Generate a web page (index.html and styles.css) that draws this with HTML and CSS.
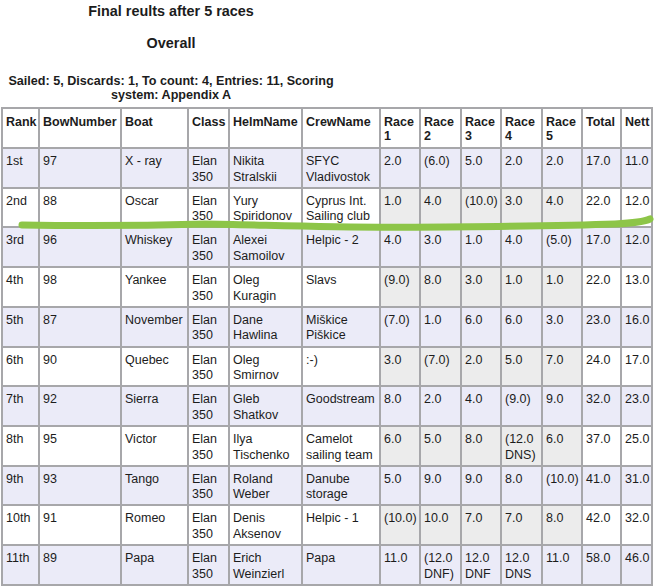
FILE: index.html
```html
<!DOCTYPE html>
<html lang="en">
<head>
<meta charset="utf-8">
<title>Final results</title>
<link rel="stylesheet" href="styles.css">
</head>
<body>
<div class="page">
  <header class="head">
    <h1 class="title">Final reults after 5 races</h1>
    <h2 class="subtitle">Overall</h2>
    <p class="meta">Sailed: 5, Discards: 1, To count: 4, Entries: 11, Scoring system: Appendix A</p>
  </header>
  <table class="results">
    <colgroup>
      <col class="c-rank"><col class="c-bow"><col class="c-boat"><col class="c-class"><col class="c-helm"><col class="c-crew">
      <col class="c-race"><col class="c-race2"><col class="c-race"><col class="c-race2"><col class="c-race"><col class="c-total"><col class="c-nett">
    </colgroup>
    <thead>
      <tr><th>Rank</th><th>BowNumber</th><th>Boat</th><th>Class</th><th>HelmName</th><th>CrewName</th><th>Race 1</th><th>Race 2</th><th>Race 3</th><th>Race 4</th><th>Race 5</th><th>Total</th><th>Nett</th></tr>
    </thead>
    <tbody>
      <tr class="odd"><td>1st</td><td>97</td><td>X - ray</td><td>Elan 350</td><td>Nikita Stralskii</td><td>SFYC Vladivostok</td><td class="r">2.0</td><td class="r">(6.0)</td><td class="r">5.0</td><td class="r">2.0</td><td class="r">2.0</td><td>17.0</td><td>11.0</td></tr>
      <tr><td>2nd</td><td>88</td><td>Oscar</td><td>Elan 350</td><td>Yury Spiridonov</td><td>Cyprus Int. Sailing club</td><td class="r">1.0</td><td class="r">4.0</td><td class="r">(10.0)</td><td class="r">3.0</td><td class="r">4.0</td><td>22.0</td><td>12.0</td></tr>
      <tr class="odd"><td>3rd</td><td>96</td><td>Whiskey</td><td>Elan 350</td><td>Alexei Samoilov</td><td>Helpic - 2</td><td class="r">4.0</td><td class="r">3.0</td><td class="r">1.0</td><td class="r">4.0</td><td class="r">(5.0)</td><td>17.0</td><td>12.0</td></tr>
      <tr><td>4th</td><td>98</td><td>Yankee</td><td>Elan 350</td><td>Oleg Kuragin</td><td>Slavs</td><td class="r">(9.0)</td><td class="r">8.0</td><td class="r">3.0</td><td class="r">1.0</td><td class="r">1.0</td><td>22.0</td><td>13.0</td></tr>
      <tr class="odd"><td>5th</td><td>87</td><td>November</td><td>Elan 350</td><td>Dane Hawlina</td><td>Miškice Piškice</td><td class="r">(7.0)</td><td class="r">1.0</td><td class="r">6.0</td><td class="r">6.0</td><td class="r">3.0</td><td>23.0</td><td>16.0</td></tr>
      <tr><td>6th</td><td>90</td><td>Quebec</td><td>Elan 350</td><td>Oleg Smirnov</td><td>:-)</td><td class="r">3.0</td><td class="r">(7.0)</td><td class="r">2.0</td><td class="r">5.0</td><td class="r">7.0</td><td>24.0</td><td>17.0</td></tr>
      <tr class="odd"><td>7th</td><td>92</td><td>Sierra</td><td>Elan 350</td><td>Gleb Shatkov</td><td>Goodstream</td><td class="r">8.0</td><td class="r">2.0</td><td class="r">4.0</td><td class="r">(9.0)</td><td class="r">9.0</td><td>32.0</td><td>23.0</td></tr>
      <tr><td>8th</td><td>95</td><td>Victor</td><td>Elan 350</td><td>Ilya Tischenko</td><td>Camelot sailing team</td><td class="r">6.0</td><td class="r">5.0</td><td class="r">8.0</td><td class="r">(12.0 DNS)</td><td class="r">6.0</td><td>37.0</td><td>25.0</td></tr>
      <tr class="odd"><td>9th</td><td>93</td><td>Tango</td><td>Elan 350</td><td>Roland Weber</td><td>Danube storage</td><td class="r">5.0</td><td class="r">9.0</td><td class="r">9.0</td><td class="r">8.0</td><td class="r">(10.0)</td><td>41.0</td><td>31.0</td></tr>
      <tr><td>10th</td><td>91</td><td>Romeo</td><td>Elan 350</td><td>Denis Aksenov</td><td>Helpic - 1</td><td class="r">(10.0)</td><td class="r">10.0</td><td class="r">7.0</td><td class="r">7.0</td><td class="r">8.0</td><td>42.0</td><td>32.0</td></tr>
      <tr class="odd"><td>11th</td><td>89</td><td>Papa</td><td>Elan 350</td><td>Erich Weinzierl</td><td>Papa</td><td class="r">11.0</td><td class="r">(12.0 DNF)</td><td class="r">12.0 DNF</td><td class="r">12.0 DNS</td><td class="r">11.0</td><td>58.0</td><td>46.0</td></tr>
    </tbody>
  </table>
  <svg class="highlight" width="658" height="586" viewBox="0 0 658 586" aria-hidden="true">
    <path d="M22,225 C80,226 150,225.5 205,224 C255,224.5 320,227.5 400,227.2 C500,226.5 575,225.5 615,224 C635,223 646,221 650,219" />
  </svg>
</div>
</body>
</html>
```

FILE: styles.css
```css
html, body {
  margin: 0;
  padding: 0;
  background: #ffffff;
}

.page {
  position: relative;
  width: 658px;
  height: 586px;
  overflow: hidden;
  font-family: "Liberation Sans", Arial, sans-serif;
  color: #1c1c1c;
}

.head {
  width: 342px;
  text-align: center;
  padding-top: 3px;
}

.title {
  margin: 0;
  font-size: 14.4px;
  line-height: 17px;
  font-weight: bold;
}

.subtitle {
  margin: 15px 0 0;
  font-size: 14.4px;
  line-height: 17px;
  font-weight: bold;
}

.meta {
  margin: 23px 0 0;
  font-size: 12.6px;
  line-height: 13.5px;
  font-weight: bold;
}

.results {
  margin: 5px 0 0 1px;
  border-collapse: collapse;
  table-layout: fixed;
  width: 650px;
  font-size: 12.5px;
}

.c-rank { width: 37px; }
.c-bow { width: 82px; }
.c-boat { width: 67px; }
.c-class { width: 41px; }
.c-helm { width: 73px; }
.c-crew { width: 78px; }
.c-race { width: 40px; }
.c-race2 { width: 41px; }
.c-total { width: 39px; }
.c-nett { width: 31px; }

.results th,
.results td {
  border: 2px solid #a7a7aa;
  text-align: left;
  vertical-align: top;
  padding: 5px 3px 0 3px;
  line-height: 15.5px;
  overflow: hidden;
}

.results th {
  font-weight: bold;
  padding-top: 7px;
  line-height: 13.7px;
  background: #ffffff;
}

.results thead tr {
  height: 40px;
}

.results tbody tr {
  height: 39.73px;
}

.results tbody tr td {
  background: #ffffff;
}

.results tbody tr td.r {
  background: #ececec;
}

.results tbody tr.odd td,
.results tbody tr.odd td.r {
  background: #ebebf8;
}

.highlight {
  position: absolute;
  left: 0;
  top: 0;
  pointer-events: none;
}

.highlight path {
  fill: none;
  stroke: #8dc548;
  stroke-width: 7px;
  stroke-linecap: round;
  stroke-linejoin: round;
}
```
